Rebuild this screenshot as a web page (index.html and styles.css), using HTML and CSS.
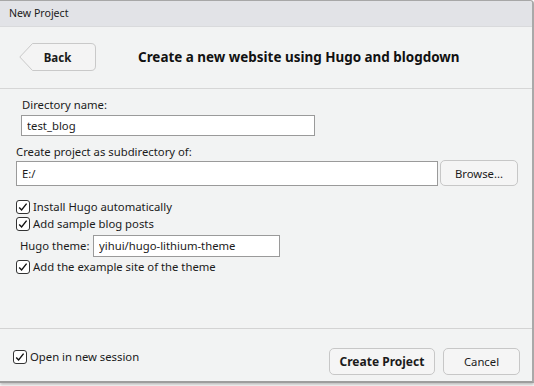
FILE: index.html
```html
<!DOCTYPE html>
<html>

<head>
  <title>New Project</title>
  <link rel="stylesheet" href="styles.css">
</head>

<body>
  <div class="dialog">
    <div class="titlebar">New Project</div>

    <div class="header">
      <div class="back-btn">
        <svg class="back-shape" width="77" height="28" viewBox="0 0 77 28">
          <path d="M13.5 0.5 H72 Q76.5 0.5 76.5 5 V23 Q76.5 27.5 72 27.5 H13.5 L0.8 14 Z" fill="#f4f4f4" stroke="#c9c9c9" />
        </svg>
        <span class="back-label">Back</span>
      </div>
      <h1 class="header-title">Create a new website using Hugo and blogdown</h1>
    </div>

    <div class="content">
      <div class="field-label indent">Directory name:</div>
      <input class="text-input dir-input" type="text" value="test_blog">

      <div class="field-label sub-label">Create project as subdirectory of:</div>
      <div class="path-row">
        <input class="text-input path-input" type="text" value="E:/">
        <button class="btn browse-btn">Browse...</button>
      </div>

      <div class="checks">
        <label class="check-row">
          <svg class="check" width="14" height="14" viewBox="0 0 14 14"><rect x="0.5" y="0.5" width="13" height="13" rx="2.5" fill="#fff" stroke="#333" /><path d="M3.2 7.4 L5.6 9.9 L10.6 3.6" fill="none" stroke="#111" stroke-width="1.4" /></svg>
          Install Hugo automatically
        </label>
        <label class="check-row">
          <svg class="check" width="14" height="14" viewBox="0 0 14 14"><rect x="0.5" y="0.5" width="13" height="13" rx="2.5" fill="#fff" stroke="#333" /><path d="M3.2 7.4 L5.6 9.9 L10.6 3.6" fill="none" stroke="#111" stroke-width="1.4" /></svg>
          Add sample blog posts
        </label>
        <div class="theme-row">
          <span class="theme-label">Hugo theme:</span>
          <input class="text-input theme-input" type="text" value="yihui/hugo-lithium-theme">
        </div>
        <label class="check-row">
          <svg class="check" width="14" height="14" viewBox="0 0 14 14"><rect x="0.5" y="0.5" width="13" height="13" rx="2.5" fill="#fff" stroke="#333" /><path d="M3.2 7.4 L5.6 9.9 L10.6 3.6" fill="none" stroke="#111" stroke-width="1.4" /></svg>
          Add the example site of the theme
        </label>
      </div>
    </div>

    <div class="footer">
      <label class="check-row session">
        <svg class="check" width="14" height="14" viewBox="0 0 14 14"><rect x="0.5" y="0.5" width="13" height="13" rx="2.5" fill="#fff" stroke="#333" /><path d="M3.2 7.4 L5.6 9.9 L10.6 3.6" fill="none" stroke="#111" stroke-width="1.4" /></svg>
        Open in new session
      </label>
      <div class="footer-buttons">
        <button class="btn create-btn">Create Project</button>
        <button class="btn cancel-btn">Cancel</button>
      </div>
    </div>
  </div>
</body>

</html>
```

FILE: styles.css
```css
* {
  box-sizing: border-box;
  margin: 0;
  padding: 0;
}

body {
  font-family: 'Noto Sans', 'Open Sans', sans-serif;
  font-size: 11.3px;
  color: #1b1b1b;
  background-color: #ffffff;
  width: 534px;
  height: 386px;
  overflow: hidden;
}

.dialog {
  width: 534px;
  height: 383px;
  border-top: 1px solid #a7a7a7;
  border-right: 2px solid #a9a9a9;
  border-bottom: 2px solid #9d9d9d;
  border-top-right-radius: 4px;
  background-color: #f2f3f3;
  box-shadow: 0 2px 3px rgba(0, 0, 0, 0.25);
  display: flex;
  flex-direction: column;
}

.titlebar {
  height: 26px;
  background-color: #e2e3e7;
  border-top-right-radius: 3px;
  padding: 5px 0 0 9px;
  font-size: 10.6px;
  color: #202020;
  border-bottom: 1px solid #d9dadc;
}

.header {
  height: 62px;
  display: flex;
  align-items: center;
  border-bottom: 1px solid #d6d6d6;
  padding: 0 0 1px 19px;
}

.back-btn {
  position: relative;
  width: 77px;
  height: 28px;
  display: flex;
  align-items: center;
  justify-content: center;
}

.back-shape {
  position: absolute;
  top: 0;
  left: 0;
}

.back-label {
  position: relative;
  font-weight: 700;
  font-size: 11.5px;
}

.header-title {
  font-size: 13.45px;
  font-weight: 700;
  margin-left: 42px;
  color: #111111;
}

.content {
  flex: 1;
  padding: 7px 0 0 16px;
}

.field-label {
  height: 17px;
  line-height: 17px;
}

.indent {
  padding-left: 6px;
}

.text-input {
  display: block;
  font-family: inherit;
  font-size: 11.3px;
  color: #1b1b1b;
  background: #ffffff;
  border: 1px solid #9a9a9a;
  padding: 0 5px;
  outline: none;
}

.dir-input {
  width: 294px;
  height: 21px;
  margin: 2px 0 0 5px;
}

.sub-label {
  margin-top: 7px;
}

.path-row {
  display: flex;
  align-items: center;
  gap: 2px;
}

.path-input {
  width: 422px;
  height: 25px;
  margin-top: 1px;
}

.btn {
  font-family: inherit;
  font-size: 11.3px;
  color: #1b1b1b;
  background-color: #f5f5f5;
  border: 1px solid #c7c7c7;
  border-radius: 5px;
}

.browse-btn {
  width: 78px;
  height: 26px;
}

.checks {
  margin-top: 12px;
}

.check-row {
  display: flex;
  align-items: center;
  gap: 3px;
  height: 17px;
}

.check {
  flex-shrink: 0;
}

.theme-row {
  display: flex;
  align-items: center;
  height: 25px;
  margin-top: 1px;
  padding-left: 4px;
}

.theme-label {
  width: 73px;
  flex-shrink: 0;
  white-space: nowrap;
}

.theme-input {
  width: 187px;
  height: 22px;
}

.footer {
  height: 53px;
  border-top: 1px solid #d3d3d3;
  display: flex;
  align-items: flex-start;
  justify-content: space-between;
  padding: 19px 12px 0 13px;
}

.footer-buttons {
  display: flex;
  gap: 8px;
}

.create-btn {
  width: 106px;
  height: 27px;
  font-size: 12px;
  font-weight: 700;
}

.cancel-btn {
  width: 77px;
  height: 27px;
}
```
